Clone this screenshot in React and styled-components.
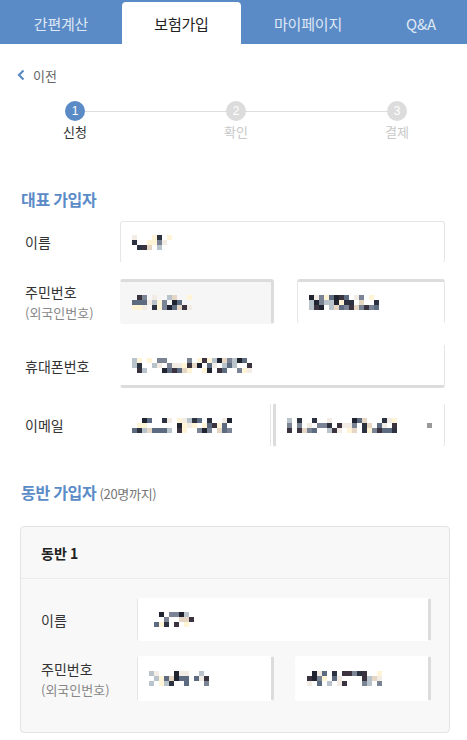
import React from 'react';
import styled, { createGlobalStyle } from 'styled-components';

const Global = createGlobalStyle`
  body {
    margin: 0;
    background: #fff;
    font-family: 'Noto Sans CJK KR', 'Noto Sans', sans-serif;
    color: #333;
  }
  * { box-sizing: border-box; }
`;

const Page = styled.div`
  width: 467px;
  min-height: 740px;
  overflow: hidden;
`;

const TabBar = styled.nav`
  display: flex;
  height: 44px;
  background: #5b8bc7;
  align-items: flex-end;
`;

const Tab = styled.div`
  width: ${p => p.$w}px;
  height: ${p => (p.$active ? 42 : 44)}px;
  display: flex;
  align-items: center;
  justify-content: center;
  font-size: 15px;
  letter-spacing: -0.2px;
  color: ${p => (p.$active ? '#222' : '#dfe8f5')};
  background: ${p => (p.$active ? '#fff' : 'transparent')};
  border-radius: ${p => (p.$active ? '4px 4px 0 0' : '0')};
  padding-top: ${p => (p.$active ? 0 : 2)}px;
`;

const Back = styled.div`
  display: flex;
  align-items: center;
  gap: 8px;
  margin: 22px 0 0 17px;
  height: 18px;
  font-size: 13px;
  color: #666;
`;

const Stepper = styled.div`
  position: relative;
  display: flex;
  justify-content: space-between;
  margin: 17px 50px 0 55px;
`;

const StepLine = styled.div`
  position: absolute;
  left: 20px;
  right: 20px;
  top: 10px;
  height: 1px;
  background: #ddd;
`;

const Step = styled.div`
  position: relative;
  width: 40px;
  display: flex;
  flex-direction: column;
  align-items: center;
  gap: 1px;
`;

const Dot = styled.div`
  width: 20px;
  height: 20px;
  border-radius: 50%;
  background: ${p => (p.$on ? '#5b8bc7' : '#dcdcdc')};
  color: #fff;
  font-family: 'Liberation Sans', Arial, sans-serif;
  font-size: 12px;
  display: flex;
  align-items: center;
  justify-content: center;
`;

const StepLabel = styled.div`
  font-size: 13px;
  line-height: 20px;
  color: ${p => (p.$on ? '#333' : '#c8c8c8')};
`;

const SectionTitle = styled.h2`
  margin: ${p => p.$mt}px 0 0 21px;
  font-size: 16px;
  line-height: 22px;
  font-weight: 700;
  color: #5b8bc7;
  letter-spacing: -0.3px;
`;

const Note = styled.span`
  font-size: 13px;
  font-weight: 400;
  color: #777;
  margin-left: 3px;
`;

const Form = styled.div`
  display: flex;
  flex-direction: column;
  padding: 0 ${p => p.$pr}px 0 ${p => p.$pl}px;
  margin-top: ${p => p.$mt}px;
`;

const Row = styled.div`
  display: grid;
  grid-template-columns: ${p => p.$label}px 1fr;
  align-items: center;
  margin-bottom: ${p => p.$mb}px;
`;

const Label = styled.div`
  font-size: 14px;
  color: #333;
  line-height: 20px;
  small {
    display: block;
    font-size: 13px;
    color: #888;
    line-height: 18px;
    margin-top: 2px;
  }
`;

const Inputs = styled.div`
  display: flex;
  gap: ${p => p.$gap}px;
`;

const edge = '3px solid #dcdcdc';
const thin = '1px solid #e6e6e6';

const Field = styled.div`
  flex: ${p => p.$grow || 1} 1 0;
  min-width: 0;
  height: ${p => p.$h}px;
  display: flex;
  align-items: center;
  justify-content: space-between;
  padding: 0 12px 0 11px;
  background: ${p => (p.$fill ? '#f6f6f6' : '#fff')};
  border-radius: 3px;
  border-top: ${p => (p.$t ? edge : p.$nt ? '1px solid transparent' : thin)};
  border-right: ${p => (p.$r ? edge : thin)};
  border-bottom: ${p => (p.$b ? edge : '1px solid transparent')};
  border-left: ${p => (p.$l ? edge : p.$nl ? '1px solid transparent' : thin)};
`;

const Card = styled.section`
  margin: 21px 17px 0 20px;
  background: #f8f8f8;
  border: 1px solid #e3e3e3;
  border-radius: 4px;
  padding-bottom: 31px;
`;

const CardHead = styled.div`
  height: 52px;
  display: flex;
  align-items: center;
  padding-left: 20px;
  font-size: 14px;
  font-weight: 700;
  color: #222;
  border-bottom: 1px solid #ececec;
`;

const palette = ['#1f2430', '#2c3240', '#7a8494', '#e6d6c4', '#fff4d6', '#5d6b80', '#b9c3cc', '#3b3440', '#f2ece4'];

function Mosaic({ cells, seed }) {
  const rects = [];
  let s = seed;
  for (let i = 0; i < cells; i++) {
    for (let j = 0; j < 3; j++) {
      s = (s * 9301 + 49297) % 233280;
      const r = s / 233280;
      if (r < 0.35) continue;
      const c = palette[Math.floor(r * 997) % palette.length];
      rects.push(<rect key={i + '-' + j} x={i * 5} y={j * 5} width="5" height="5" fill={c} />);
    }
  }
  return (
    <svg width={cells * 5} height="15" viewBox={`0 0 ${cells * 5} 15`}>
      {rects}
    </svg>
  );
}

const Chevron = () => (
  <svg width="8" height="12" viewBox="0 0 8 12">
    <path d="M6.5 1.5 L2 6 L6.5 10.5" fill="none" stroke="#5b8bc7" strokeWidth="2.2" />
  </svg>
);

const Dim = styled.span`
  width: 5px;
  height: 5px;
  background: #999;
`;

export default function App() {
  return (
    <Page>
      <Global />
      <TabBar>
        <Tab $w={122}>간편계산</Tab>
        <Tab $w={119} $active>보험가입</Tab>
        <Tab $w={134}>마이페이지</Tab>
        <Tab $w={92}>Q&amp;A</Tab>
      </TabBar>

      <Back><Chevron />이전</Back>

      <Stepper>
        <StepLine />
        <Step><Dot $on>1</Dot><StepLabel $on>신청</StepLabel></Step>
        <Step><Dot>2</Dot><StepLabel>확인</StepLabel></Step>
        <Step><Dot>3</Dot><StepLabel>결제</StepLabel></Step>
      </Stepper>

      <SectionTitle $mt={46}>대표 가입자</SectionTitle>
      <Form $pl={25} $pr={22} $mt={11}>
        <Row $label={95} $mb={16}>
          <Label>이름</Label>
          <Field $h={42}><Mosaic cells={8} seed={11} /></Field>
        </Row>
        <Row $label={95} $mb={20}>
          <Label>주민번호<small>(외국인번호)</small></Label>
          <Inputs $gap={23}>
            <Field $h={45} $grow={153} $fill $t $r $nl><Mosaic cells={12} seed={23} /></Field>
            <Field $h={45} $grow={149} $t><Mosaic cells={14} seed={37} /></Field>
          </Inputs>
        </Row>
        <Row $label={95} $mb={15}>
          <Label>휴대폰번호</Label>
          <Field $h={44} $b $nt $nl><Mosaic cells={24} seed={41} /></Field>
        </Row>
        <Row $label={95} $mb={0}>
          <Label>이메일</Label>
          <Inputs $gap={2}>
            <Field $h={44} $grow={150} $nt $nl><Mosaic cells={20} seed={53} /></Field>
            <Field $h={44} $grow={173} $l $nt><Mosaic cells={22} seed={67} /><Dim /></Field>
          </Inputs>
        </Row>
      </Form>

      <SectionTitle $mt={34}>동반 가입자<Note>(20명까지)</Note></SectionTitle>
      <Card>
        <CardHead>동반 1</CardHead>
        <Form $pl={20} $pr={18} $mt={19}>
          <Row $label={96} $mb={15}>
            <Label>이름</Label>
            <Field $h={43} $r $nt><Mosaic cells={9} seed={71} /></Field>
          </Row>
          <Row $label={96} $mb={0}>
            <Label>주민번호<small>(외국인번호)</small></Label>
            <Inputs $gap={21}>
              <Field $h={45} $r $nt><Mosaic cells={12} seed={83} /></Field>
              <Field $h={45} $r $nt $nl><Mosaic cells={15} seed={97} /></Field>
            </Inputs>
          </Row>
        </Form>
      </Card>
    </Page>
  );
}
